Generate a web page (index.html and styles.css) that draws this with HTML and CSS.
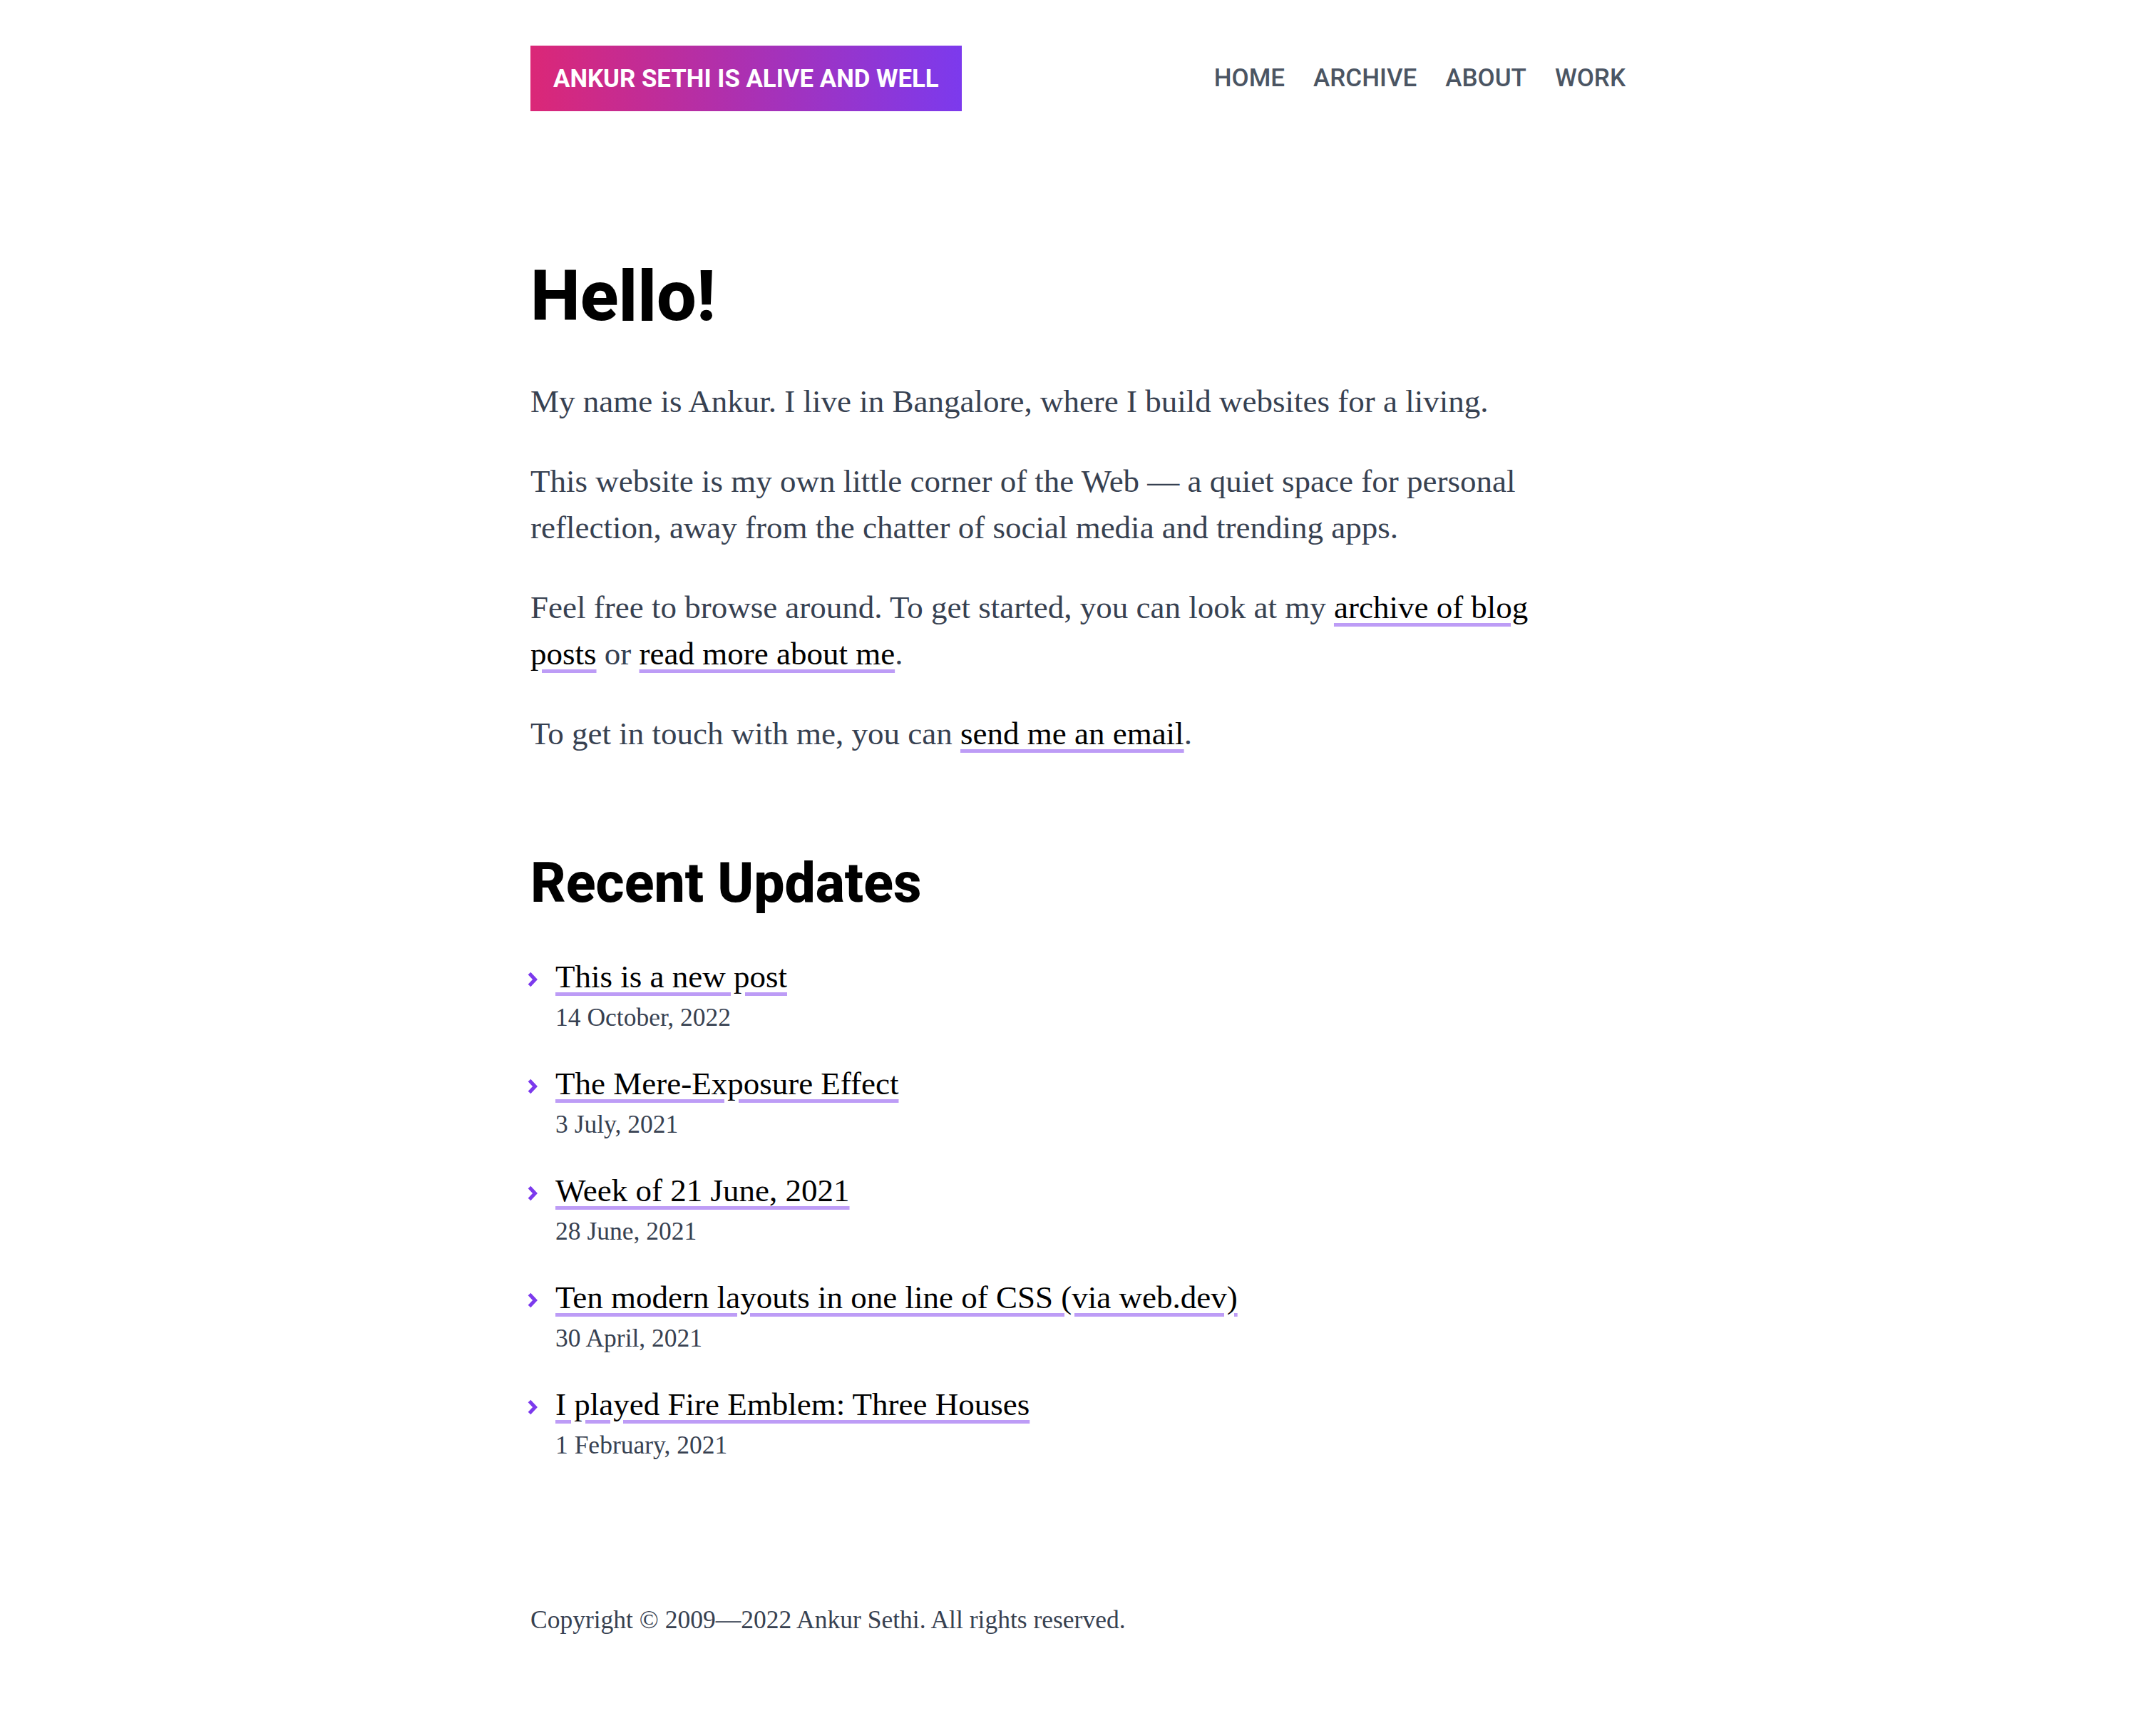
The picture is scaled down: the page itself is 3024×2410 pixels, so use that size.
FILE: index.html
```html
<!DOCTYPE html>
<html lang="en">
<head>
<meta charset="utf-8">
<title>Ankur Sethi is alive and well</title>
<link rel="stylesheet" href="styles.css">
</head>
<body>
<div class="page">
  <header class="site-header">
    <a class="logo" href="#">Ankur Sethi is alive and well</a>
    <nav class="nav">
      <a href="#">Home</a>
      <a href="#">Archive</a>
      <a href="#">About</a>
      <a href="#">Work</a>
    </nav>
  </header>

  <main class="main">
    <section class="intro">
      <h1 class="title">Hello!</h1>
      <div class="prose">
        <p>My name is Ankur. I live in Bangalore, where I build websites for a living.</p>
        <p>This website is my own little corner of the Web — a quiet space for personal reflection, away from the chatter of social media and trending apps.</p>
        <p>Feel free to browse around. To get started, you can look at my <a href="#">archive of blog posts</a> or <a href="#">read more about me</a>.</p>
        <p>To get in touch with me, you can <a href="#">send me an email</a>.</p>
      </div>
    </section>

    <section class="recent">
      <h2 class="subtitle">Recent Updates</h2>
      <ul class="updates">
        <li class="update">
          <svg class="chevron" viewBox="0 0 14 22" aria-hidden="true"><path d="M2.5 2.5 L10.5 11 L2.5 19.5"/></svg>
          <div class="update-body">
            <a class="update-title" href="#">This is a new post</a>
            <div class="update-date">14 October, 2022</div>
          </div>
        </li>
        <li class="update">
          <svg class="chevron" viewBox="0 0 14 22" aria-hidden="true"><path d="M2.5 2.5 L10.5 11 L2.5 19.5"/></svg>
          <div class="update-body">
            <a class="update-title" href="#">The Mere-Exposure Effect</a>
            <div class="update-date">3 July, 2021</div>
          </div>
        </li>
        <li class="update">
          <svg class="chevron" viewBox="0 0 14 22" aria-hidden="true"><path d="M2.5 2.5 L10.5 11 L2.5 19.5"/></svg>
          <div class="update-body">
            <a class="update-title" href="#">Week of 21 June, 2021</a>
            <div class="update-date">28 June, 2021</div>
          </div>
        </li>
        <li class="update">
          <svg class="chevron" viewBox="0 0 14 22" aria-hidden="true"><path d="M2.5 2.5 L10.5 11 L2.5 19.5"/></svg>
          <div class="update-body">
            <a class="update-title" href="#">Ten modern layouts in one line of CSS (via web.dev)</a>
            <div class="update-date">30 April, 2021</div>
          </div>
        </li>
        <li class="update">
          <svg class="chevron" viewBox="0 0 14 22" aria-hidden="true"><path d="M2.5 2.5 L10.5 11 L2.5 19.5"/></svg>
          <div class="update-body">
            <a class="update-title" href="#">I played Fire Emblem: Three Houses</a>
            <div class="update-date">1 February, 2021</div>
          </div>
        </li>
      </ul>
    </section>
  </main>

  <footer class="site-footer">
    <p>Copyright © 2009—2022 Ankur Sethi. All rights reserved.</p>
  </footer>
</div>
</body>
</html>
```

FILE: styles.css
```css
html, body {
  margin: 0;
  padding: 0;
  background: #ffffff;
}

body {
  font-family: "Liberation Serif", "Times New Roman", serif;
  color: #374151;
}

.page {
  max-width: 1536px;
  margin: 0 auto;
  padding: 64px 0 110px;
}

/* Header */
.site-header {
  display: flex;
  justify-content: space-between;
  align-items: center;
}

.logo {
  display: inline-block;
  padding: 24px 32px;
  line-height: 44px;
  font-family: Roboto, "Liberation Sans", sans-serif;
  font-weight: 700;
  font-size: 34.8px;
  text-transform: uppercase;
  color: #ffffff;
  text-decoration: none;
  background: linear-gradient(to right, #db2777, #7c3aed);
}

.nav {
  display: flex;
  gap: 40px;
}

.nav a {
  font-family: Roboto, "Liberation Sans", sans-serif;
  font-weight: 500;
  font-size: 35px;
  line-height: 44px;
  text-transform: uppercase;
  color: #4b5563;
  text-decoration: none;
}

/* Main */
.main {
  padding-top: 210px;
}

.title {
  margin: 0 0 66px;
  font-family: Roboto, "Liberation Sans", sans-serif;
  font-weight: 800;
  font-size: 99px;
  line-height: 99px;
  color: #000000;
}

.prose {
  display: flex;
  flex-direction: column;
  gap: 47px;
  max-width: 1480px;
}

.prose p {
  margin: 0;
  font-size: 45px;
  line-height: 65px;
}

.prose a,
.update-title {
  color: #000000;
  text-decoration: underline;
  text-decoration-color: rgba(124, 58, 237, 0.5);
  text-decoration-thickness: 5px;
  text-underline-offset: 7px;
}

/* Recent updates */
.recent {
  margin-top: 139px;
}

.subtitle {
  margin: 0 0 62px;
  font-family: Roboto, "Liberation Sans", sans-serif;
  font-weight: 800;
  font-size: 77px;
  line-height: 77px;
  color: #000000;
}

.updates {
  list-style: none;
  margin: 0;
  padding: 0;
  display: flex;
  flex-direction: column;
  gap: 36px;
}

.update {
  display: grid;
  grid-template-columns: 35px 1fr;
  align-items: start;
}

.chevron {
  width: 14px;
  height: 22px;
  margin: 23px 0 0 -4px;
  fill: none;
  stroke: #7c3aed;
  stroke-width: 5;
}

.update-title {
  display: inline-block;
  font-size: 45px;
  line-height: 60px;
}

.update-date {
  font-size: 35.5px;
  line-height: 54px;
  color: #374151;
}

/* Footer */
.site-footer {
  margin-top: 191px;
}

.site-footer p {
  margin: 0;
  font-size: 35.5px;
  line-height: 54px;
  color: #374151;
}
```
